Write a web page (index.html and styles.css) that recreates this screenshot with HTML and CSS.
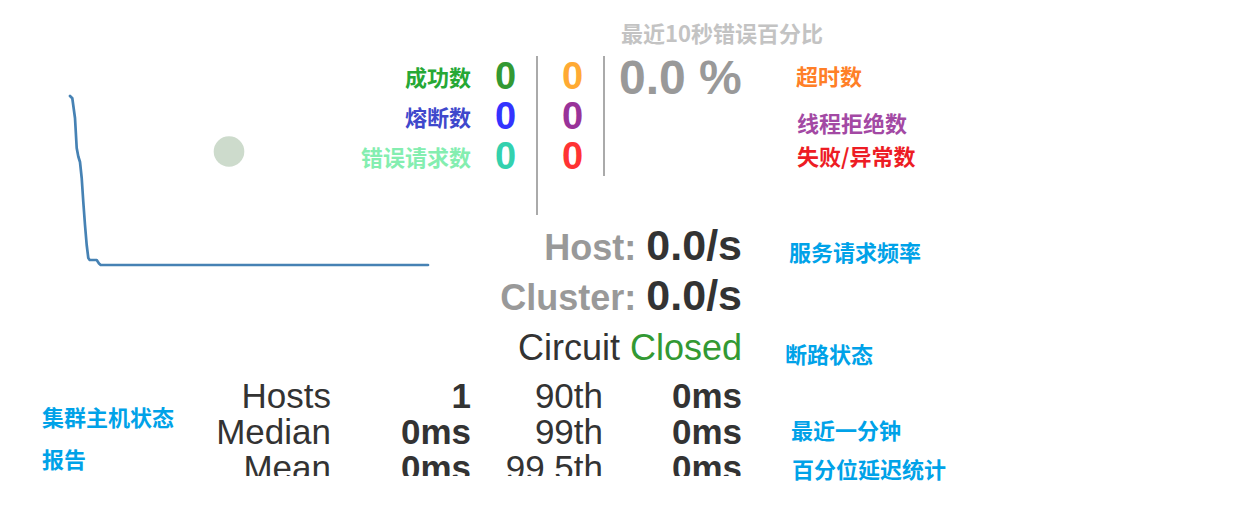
FILE: index.html
```html
<!DOCTYPE html>
<html lang="zh-CN">
<head>
<meta charset="utf-8">
<title>Hystrix Dashboard</title>
<link rel="stylesheet" href="styles.css">
</head>
<body>
<div class="page">
  <div class="monitor">
    <svg class="spark" width="480" height="290" viewBox="0 0 480 290" aria-hidden="true">
      <circle cx="229" cy="151.5" r="15.3" fill="#cddbcc"/>
      <polyline points="70,96 72.3,98.3 75,118 76.7,148 78.3,156.5 80,162 81.7,178 83.3,202 85,225 86.7,245 88.3,258 89.7,260 96.7,260 99,263.5 100.7,265 428,265" fill="none" stroke="#4682b4" stroke-width="2.7" stroke-linejoin="round" stroke-linecap="round"/>
    </svg>
    <div class="counts">
      <div class="count-labels">
        <div class="lbl-success">成功数</div>
        <div class="lbl-short">熔断数</div>
        <div class="lbl-bad">错误请求数</div>
      </div>
      <div class="count-col col-a">
        <div class="success">0</div>
        <div class="short">0</div>
        <div class="bad">0</div>
      </div>
      <div class="count-col col-b">
        <div class="timeout">0</div>
        <div class="rejected">0</div>
        <div class="failure">0</div>
      </div>
      <div class="error-pct">0.0 %</div>
    </div>
    <div class="rates">
      <div class="rate"><span class="rate-label">Host:</span> <span class="rate-value">0.0/s</span></div>
      <div class="rate"><span class="rate-label">Cluster:</span> <span class="rate-value">0.0/s</span></div>
      <div class="circuit">Circuit <span class="closed">Closed</span></div>
    </div>
    <div class="latency">
      <span class="lat-label">Hosts</span><span class="lat-value">1</span><span class="lat-label">90th</span><span class="lat-value">0ms</span>
      <span class="lat-label">Median</span><span class="lat-value">0ms</span><span class="lat-label">99th</span><span class="lat-value">0ms</span>
      <span class="lat-label">Mean</span><span class="lat-value">0ms</span><span class="lat-label">99.5th</span><span class="lat-value">0ms</span>
    </div>
  </div>

  <div class="note note-err">最近10秒错误百分比</div>
  <div class="note note-timeout">超时数</div>
  <div class="note note-rejected">线程拒绝数</div>
  <div class="note note-failure">失败/异常数</div>
  <div class="note note-rate">服务请求频率</div>
  <div class="note note-circuit">断路状态</div>
  <div class="note note-minute">最近一分钟</div>
  <div class="note note-pct">百分位延迟统计</div>
  <div class="note note-hosts">集群主机状态<br>报告</div>
</div>
</body>
</html>
```

FILE: styles.css
```css
* { box-sizing: border-box; }

body {
  margin: 0;
  background: #fff;
}

.page {
  position: relative;
  width: 1242px;
  height: 519px;
  overflow: hidden;
  font-family: "Liberation Sans", Arial, sans-serif;
  color: #333;
}

.monitor {
  position: relative;
  width: 742px;
  padding-top: 56px;
}

.spark {
  position: absolute;
  left: 0;
  top: 0;
  pointer-events: none;
}

.counts {
  position: relative;
  display: flex;
  align-items: flex-start;
}

.count-labels {
  flex: 1;
  text-align: right;
  font-family: "Noto Sans CJK SC", sans-serif;
  font-weight: 700;
  font-size: 22px;
  line-height: 40px;
  white-space: nowrap;
}

.lbl-success { color: #26a835; }
.lbl-short { color: #3f48cc; }
.lbl-bad { color: #84eeb0; }

.count-col {
  width: 67px;
  padding-left: 24px;
  border-right: 2px solid #aaa;
  font-weight: 700;
  font-size: 38px;
  line-height: 40px;
}

.col-a { height: 159px; }
.col-b { height: 120px; }

.success { color: #339933; }
.short { color: #3333ff; }
.bad { color: #33d1ae; }
.timeout { color: #ffaa33; }
.rejected { color: #993399; }
.failure { color: #ff3333; }

.error-pct {
  width: 137px;
  padding-left: 14px;
  font-weight: 700;
  font-size: 48px;
  line-height: 44px;
  color: #999;
  white-space: nowrap;
}

.rates {
  position: relative;
  margin-top: 5px;
  text-align: right;
}

.rate {
  height: 50px;
  line-height: 50px;
  font-size: 36px;
  font-weight: 700;
  color: #999;
  white-space: nowrap;
}

.rate-value {
  font-size: 43px;
  color: #333;
}

.circuit {
  height: 50px;
  margin-top: 3px;
  line-height: 50px;
  font-size: 36px;
  color: #333;
  white-space: nowrap;
}

.closed { color: #339933; }

.latency {
  position: relative;
  display: grid;
  grid-template-columns: 151px 140px 132px 139px;
  margin: 5px 0 0 180px;
  height: 98px;
  overflow: hidden;
  font-size: 35px;
  line-height: 36px;
  color: #333;
}

.latency span {
  text-align: right;
  white-space: nowrap;
}

.lat-value { font-weight: 700; }

.note {
  position: absolute;
  font-family: "Noto Sans CJK SC", sans-serif;
  font-weight: 700;
  font-size: 22px;
  line-height: 22px;
  white-space: nowrap;
}

.note-err { left: 621px; top: 21px; color: #c3c3c3; }
.note-timeout { left: 796px; top: 64px; color: #ff7f27; }
.note-rejected { left: 797px; top: 111px; color: #a349a4; }
.note-failure { left: 797px; top: 144px; color: #ed1c24; }
.note-rate { left: 789px; top: 240px; color: #00a2e8; }
.note-circuit { left: 785px; top: 342px; color: #00a2e8; }
.note-minute { left: 791px; top: 418px; color: #00a2e8; }
.note-pct { left: 792px; top: 457px; color: #00a2e8; }
.note-hosts { left: 42px; top: 395px; line-height: 42px; color: #00a2e8; }
```
